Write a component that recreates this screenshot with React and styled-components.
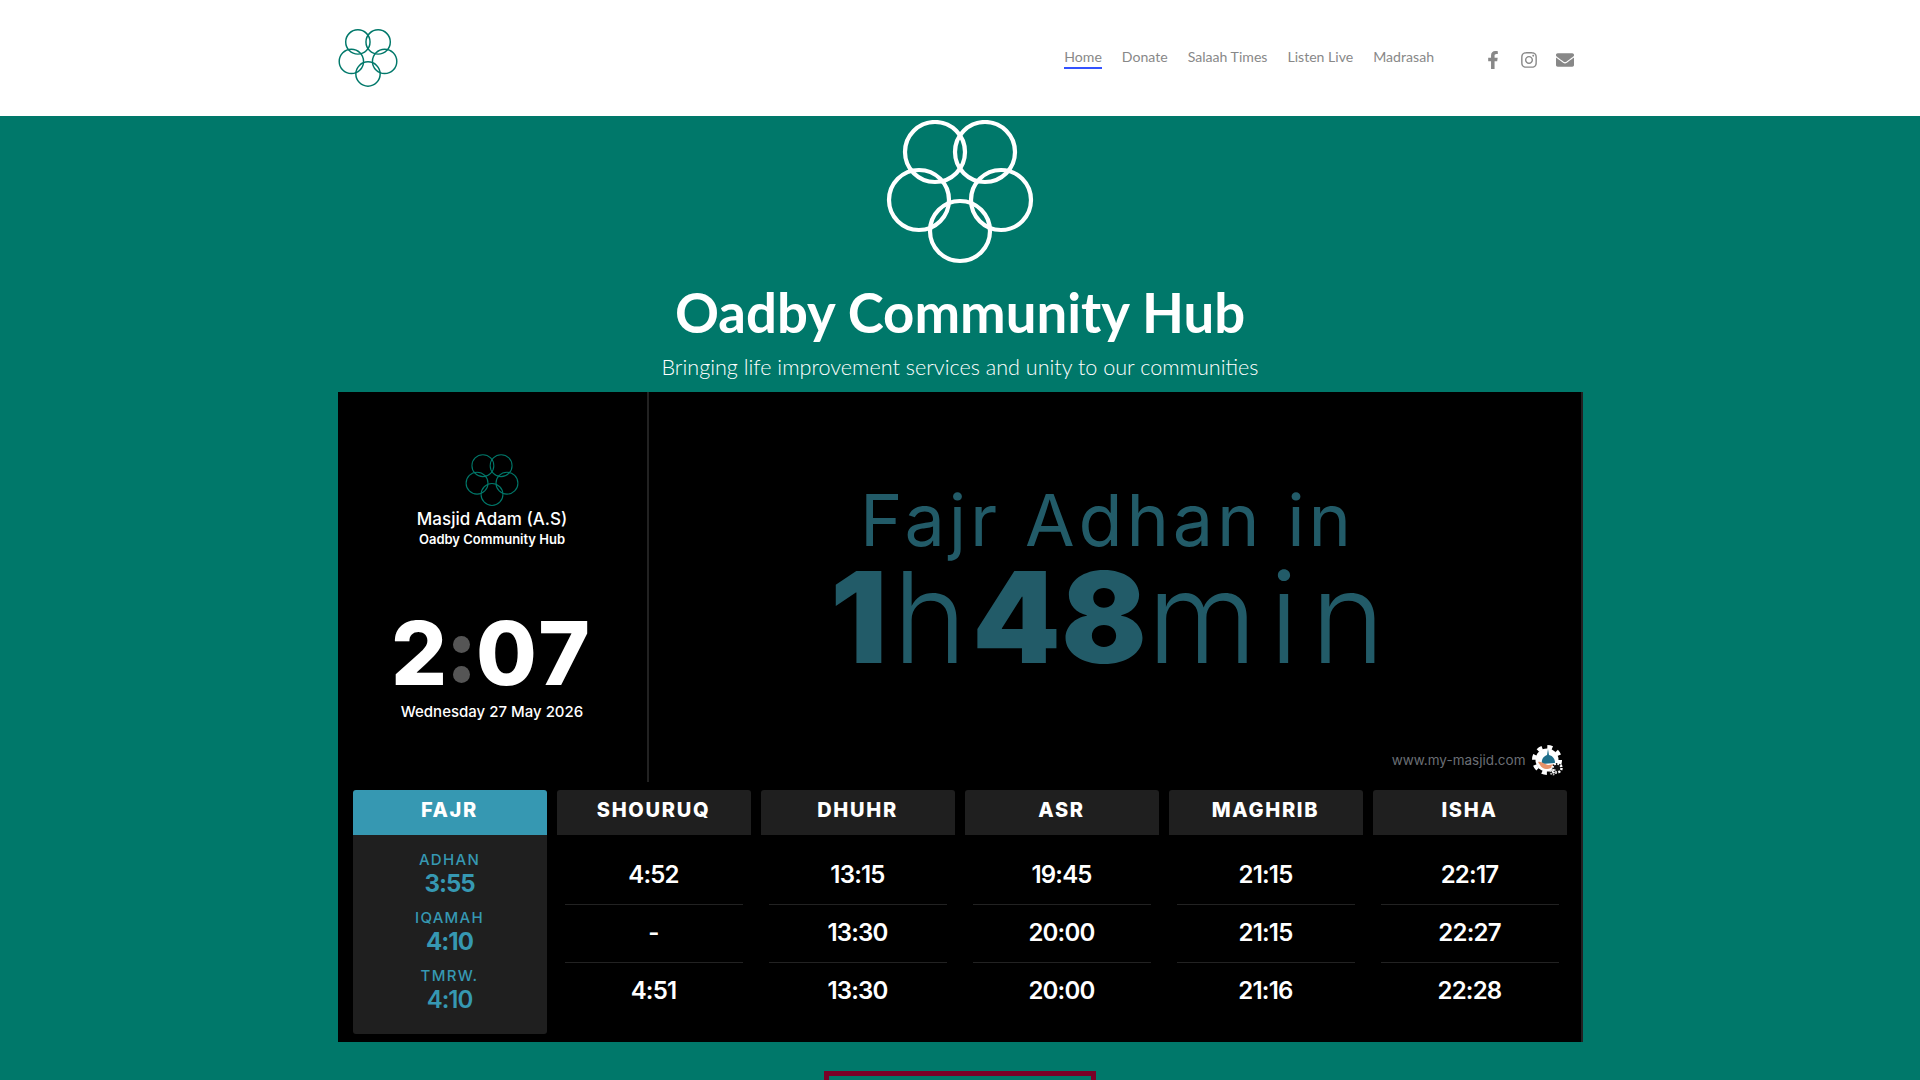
import React from "react";
import styled, { createGlobalStyle } from "styled-components";
import { FaFacebookF, FaInstagram, FaEnvelope } from "react-icons/fa";

const GlobalStyle = createGlobalStyle`
  html, body {
    margin: 0;
    height: 100%;
    overflow: hidden;
    background: #00786a;
    font-family: "Lato", "Liberation Sans", sans-serif;
  }
`;

const Header = styled.header`
  height: 116px;
  background: #fff;
  display: flex;
  align-items: center;
  padding: 0 346px 0 338px;
`;

const Nav = styled.nav`
  margin-left: auto;
  display: flex;
  gap: 20px;
`;

const NavLink = styled.a`
  font-size: 14.1px;
  line-height: 20px;
  color: #888;
  border-bottom: 2px solid ${(p) => (p.$active ? "#3452ff" : "transparent")};
`;

const Social = styled.div`
  display: flex;
  align-items: center;
  gap: 18px;
  margin-left: 50px;
  margin-top: 3px;
  color: #888;
  font-size: 18px;
`;

const LogoSvg = styled.svg`
  display: block;
  width: ${(p) => p.$w}px;
  height: ${(p) => (p.$w * 144) / 148}px;
  margin: ${(p) => p.$m || 0};
`;

const Hero = styled.main`
  display: flex;
  flex-direction: column;
  align-items: center;
`;

const Title = styled.h1`
  margin: 16px 0 0;
  font-size: 54.5px;
  line-height: 64px;
  font-weight: 700;
  color: #fff;
`;

const Subtitle = styled.p`
  margin: 9px 0 11px;
  font-size: 21.6px;
  line-height: 28px;
  font-weight: 300;
  color: #fff;
`;

const Widget = styled.section`
  width: 1245px;
  height: 650px;
  box-sizing: border-box;
  background: #000;
  border-right: 2px solid #222;
  font-family: "Inter", "Liberation Sans", sans-serif;
  color: #fff;
`;

const TopRow = styled.div`
  height: 390px;
  display: flex;
`;

const Side = styled.div`
  width: 311px;
  flex: none;
  box-sizing: border-box;
  border-right: 2px solid #222;
  padding-top: 62px;
  display: flex;
  flex-direction: column;
  align-items: center;
`;

const MasjidName = styled.div`
  font-size: 17px;
  line-height: 22px;
  font-weight: 500;
  margin-top: 1px;
`;

const MasjidSub = styled.div`
  font-size: 13px;
  line-height: 16px;
  font-weight: 600;
  margin-top: 1px;
`;

const Clock = styled.div`
  display: flex;
  align-items: center;
  gap: 6px;
  margin-top: 74px;
  height: 64px;
  font-size: 88px;
  line-height: 64px;
  font-weight: 800;
`;

const ClockDigits = styled.span`
  letter-spacing: ${(p) => p.$spacing || 0}px;
`;

const Dots = styled.div`
  display: flex;
  flex-direction: column;
  gap: 13px;
  margin-top: 14px;
`;

const Dot = styled.span`
  width: 17px;
  height: 17px;
  border-radius: 50%;
  background: #555;
`;

const DateLine = styled.div`
  margin-top: 17px;
  font-size: 15px;
  line-height: 20px;
  font-weight: 500;
`;

const Countdown = styled.div`
  flex: 1;
  display: flex;
  flex-direction: column;
  align-items: center;
  padding: 88px 14px 0 0;
  color: #225b68;
`;

const Until = styled.div`
  font-size: 72px;
  line-height: 80px;
  font-weight: 400;
  letter-spacing: 3.8px;
`;

const Remaining = styled.div`
  font-size: 126px;
  line-height: 114px;
  font-weight: 300;
  white-space: nowrap;
  margin-right: -12px;
`;

const Num = styled.b`
  font-weight: 900;
  letter-spacing: ${(p) => p.$spacing}px;
`;

const Unit = styled.span`
  letter-spacing: ${(p) => p.$spacing}px;
`;

const Credit = styled.div`
  margin-top: auto;
  margin-bottom: 6px;
  margin-right: 3px;
  align-self: flex-end;
  display: flex;
  align-items: center;
  gap: 6px;
  font-size: 13.5px;
  color: #6b6f75;
`;

const Table = styled.div`
  display: grid;
  grid-template-columns: repeat(6, 1fr);
  gap: 10px;
  padding: 8px 14px 0 15px;
`;

const Column = styled.div`
  display: flex;
  flex-direction: column;
`;

const ColumnHead = styled.div`
  height: 45px;
  border-radius: 3px 3px 0 0;
  background: ${(p) => (p.$active ? "#3698b2" : "#1f1f1f")};
  font-size: 20px;
  line-height: 40px;
  font-weight: 800;
  letter-spacing: 1.7px;
  text-align: center;
`;

const FajrBody = styled.div`
  height: 199px;
  box-sizing: border-box;
  padding-top: 16px;
  background: #1f1f1f;
  border-radius: 0 0 3px 3px;
  color: #3698b2;
  text-align: center;
`;

const FajrGroup = styled.div`
  margin-bottom: 12px;
`;

const FajrLabel = styled.div`
  font-size: 15px;
  line-height: 18px;
  font-weight: 500;
  letter-spacing: 1.3px;
`;

const FajrTime = styled.div`
  margin-top: 2px;
  font-size: 24px;
  line-height: 26px;
  font-weight: ${(p) => p.$weight};
  letter-spacing: -1px;
`;

const CellList = styled.div`
  padding-top: 12px;
`;

const Cell = styled.div`
  height: 58px;
  box-sizing: border-box;
  margin: 0 8px;
  border-bottom: 1px solid ${(p) => (p.$last ? "transparent" : "#222")};
  font-size: 24px;
  line-height: 56px;
  font-weight: 600;
  letter-spacing: -0.8px;
  text-align: center;
`;

const RedBox = styled.div`
  width: 272px;
  height: 200px;
  box-sizing: border-box;
  flex: none;
  margin-top: 29px;
  border: 5px solid #7a0026;
`;

const Logo = ({ width, stroke, color, margin }) => (
  <LogoSvg viewBox="0 0 148 144" $w={width} $m={margin}>
    {[
      [49, 32],
      [99, 32],
      [33, 80],
      [115, 80],
      [74, 111],
    ].map(([cx, cy]) => (
      <circle key={cx} cx={cx} cy={cy} r="30" fill="none" stroke={color} strokeWidth={stroke} />
    ))}
  </LogoSvg>
);

const GearMark = () => (
  <svg width="32" height="32" viewBox="0 0 32 32">
    <circle cx="15" cy="16" r="11.5" fill="#fff" />
    <circle cx="15" cy="16" r="13" fill="none" stroke="#fff" strokeWidth="4" strokeDasharray="5 5.2" />
    <path d="M16 5l1 6c4 1 6 4 6 8l-13 1c-1-5 2-8 5-9z" fill="#1f6f8b" />
    <path d="M6 18c3-1 6 2 10 3 3 0 5-1 7-1-1 3-5 5-9 5-4 0-6-4-8-7z" fill="#e8936a" />
    <circle cx="25" cy="24" r="5" fill="#111" />
    <circle cx="25" cy="24" r="4.5" fill="none" stroke="#fff" strokeWidth="2.5" strokeDasharray="2 1.5" />
    <circle cx="21" cy="28" r="2.5" fill="none" stroke="#bbb" strokeWidth="2" strokeDasharray="1.5 1" />
  </svg>
);

const prayers = [
  { name: "SHOURUQ", times: ["4:52", "-", "4:51"] },
  { name: "DHUHR", times: ["13:15", "13:30", "13:30"] },
  { name: "ASR", times: ["19:45", "20:00", "20:00"] },
  { name: "MAGHRIB", times: ["21:15", "21:15", "21:16"] },
  { name: "ISHA", times: ["22:17", "22:27", "22:28"] },
];

const fajr = [
  { label: "ADHAN", time: "3:55", weight: 700 },
  { label: "IQAMAH", time: "4:10", weight: 700 },
  { label: "TMRW.", time: "4:10", weight: 600 },
];

export default function App() {
  return (
    <>
      <GlobalStyle />
      <Header>
        <Logo width={60} stroke={3.6} color="#00786a" />
        <Nav>
          <NavLink $active>Home</NavLink>
          <NavLink>Donate</NavLink>
          <NavLink>Salaah Times</NavLink>
          <NavLink>Listen Live</NavLink>
          <NavLink>Madrasah</NavLink>
        </Nav>
        <Social>
          <FaFacebookF />
          <FaInstagram />
          <FaEnvelope />
        </Social>
      </Header>
      <Hero>
        <Logo width={148} stroke={4.2} color="#fff" margin="4px 0 0" />
        <Title>Oadby Community Hub</Title>
        <Subtitle>Bringing life improvement services and unity to our communities</Subtitle>
        <Widget>
          <TopRow>
            <Side>
              <Logo width={54} stroke={3} color="#00786a" />
              <MasjidName>Masjid Adam (A.S)</MasjidName>
              <MasjidSub>Oadby Community Hub</MasjidSub>
              <Clock>
                <ClockDigits>2</ClockDigits>
                <Dots>
                  <Dot />
                  <Dot />
                </Dots>
                <ClockDigits $spacing={3}>07</ClockDigits>
              </Clock>
              <DateLine>Wednesday 27 May 2026</DateLine>
            </Side>
            <Countdown>
              <Until>Fajr Adhan in</Until>
              <Remaining>
                <Num $spacing={5.5}>1</Num>
                <Unit $spacing={5.5}>h</Unit>
                <Num $spacing={0.5}>48</Num>
                <Unit $spacing={12}>min</Unit>
              </Remaining>
              <Credit>
                www.my-masjid.com
                <GearMark />
              </Credit>
            </Countdown>
          </TopRow>
          <Table>
            <Column>
              <ColumnHead $active>FAJR</ColumnHead>
              <FajrBody>
                {fajr.map((row) => (
                  <FajrGroup key={row.label}>
                    <FajrLabel>{row.label}</FajrLabel>
                    <FajrTime $weight={row.weight}>{row.time}</FajrTime>
                  </FajrGroup>
                ))}
              </FajrBody>
            </Column>
            {prayers.map((prayer) => (
              <Column key={prayer.name}>
                <ColumnHead>{prayer.name}</ColumnHead>
                <CellList>
                  {prayer.times.map((time, i) => (
                    <Cell key={i} $last={i === 2}>
                      {time}
                    </Cell>
                  ))}
                </CellList>
              </Column>
            ))}
          </Table>
        </Widget>
        <RedBox />
      </Hero>
    </>
  );
}
